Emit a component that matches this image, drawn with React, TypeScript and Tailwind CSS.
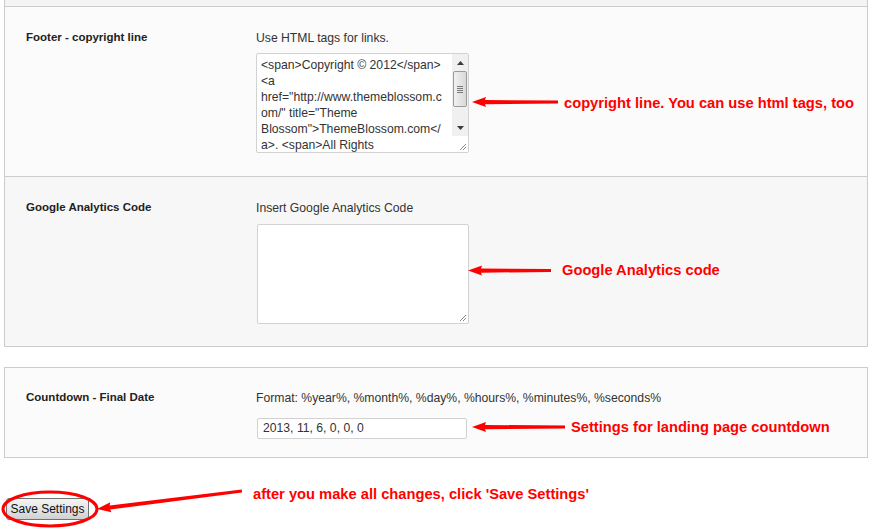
import React from 'react';

const copyrightLines = [
  '<span>Copyright © 2012</span>',
  '<a',
  'href="http://www.themeblossom.c',
  'om/" title="Theme',
  'Blossom">ThemeBlossom.com</',
  'a>. <span>All Rights',
];

// little diagonal grip in the corner of a textarea
function ResizeGrip() {
  return (
    <svg width="9" height="9" viewBox="0 0 9 9" className="block">
      <line x1="8" y1="2" x2="2" y2="8" stroke="#8a8a8a" strokeWidth="1" />
      <line x1="8" y1="5" x2="5" y2="8" stroke="#8a8a8a" strokeWidth="1" />
    </svg>
  );
}

function Scrollbar() {
  return (
    <div className="flex h-full w-[16px] flex-col bg-[#f0f0f0]">
      <div className="flex h-[17px] items-center justify-center">
        <svg width="7" height="4" viewBox="0 0 7 4">
          <polygon points="0,4 3.5,0 7,4" fill="#3c3c3c" />
        </svg>
      </div>
      <div className="mx-px flex h-[36px] items-center justify-center rounded-[2px] border border-[#9b9b9b] bg-gradient-to-r from-[#f1f1f1] to-[#d9d9d9]">
        <div className="flex flex-col gap-px">
          <div className="h-px w-[6px] bg-[#7a7a7a]" />
          <div className="h-px w-[6px] bg-[#7a7a7a]" />
          <div className="h-px w-[6px] bg-[#7a7a7a]" />
          <div className="h-px w-[6px] bg-[#7a7a7a]" />
        </div>
      </div>
      <div className="flex-1" />
      <div className="flex h-[17px] items-center justify-center">
        <svg width="7" height="4" viewBox="0 0 7 4">
          <polygon points="0,0 3.5,4 7,0" fill="#3c3c3c" />
        </svg>
      </div>
    </div>
  );
}

function Arrow({ x, y, len, angle = 0 }: { x: number; y: number; len: number; angle?: number }) {
  return (
    <g transform={`translate(${x} ${y}) rotate(${angle})`}>
      <polygon points={`0,0 14,-5 13,-2 ${len},-1.6 ${len},1.4 13,2.2 14,5`} fill="#ff0000" />
    </g>
  );
}

function Note({ children, className }: { children: React.ReactNode; className: string }) {
  return (
    <span className={`absolute whitespace-nowrap text-[14.7px] font-bold leading-none text-[#ff0000] ${className}`}>
      {children}
    </span>
  );
}

export default function App() {
  return (
    <div className="relative h-[529px] w-[874px] overflow-hidden bg-white font-['Liberation_Sans',Arial,sans-serif] text-[12.2px] text-[#333]">
      <div className="ml-[4px] w-[864px]">
        <div className="h-[7px] border-x border-b border-[#cccccc] bg-[#f4f4f4]" />

        {/* footer copyright */}
        <div className="flex h-[170px] border-x border-b border-[#cccccc] bg-[#fbfbfb] pl-[21px] pt-[23px]">
          <div className="w-[230px] text-[11.5px] font-bold leading-[14px] text-[#222]">Footer - copyright line</div>
          <div>
            <p className="mt-px leading-[14px]">Use HTML tags for links.</p>
            <div className="mt-[8px] flex h-[100px] w-[213px] overflow-hidden rounded-[2px] border border-[#d2d2d2] bg-white">
              <div className="flex-1 overflow-hidden pl-[4px] pt-[3px] leading-[16px] whitespace-pre text-[#333]">
                {copyrightLines.map((l) => (
                  <div key={l}>{l}</div>
                ))}
              </div>
              <div className="flex flex-col">
                <div className="h-[82px]">
                  <Scrollbar />
                </div>
                <div className="flex flex-1 items-end justify-end bg-white pb-px pr-px">
                  <ResizeGrip />
                </div>
              </div>
            </div>
          </div>
        </div>

        {/* analytics */}
        <div className="flex h-[170px] border-x border-b border-[#cccccc] bg-[#f7f7f7] pl-[21px] pt-[23px]">
          <div className="w-[230px] text-[11.5px] font-bold leading-[14px] text-[#222]">Google Analytics Code</div>
          <div>
            <p className="mt-px leading-[14px]">Insert Google Analytics Code</p>
            <div className="ml-px mt-[9px] flex h-[100px] w-[212px] items-end justify-end rounded-[2px] border border-[#d2d2d2] bg-white pb-px pr-px">
              <ResizeGrip />
            </div>
          </div>
        </div>

        {/* countdown */}
        <div className="mt-[20px] flex h-[91px] border border-[#cccccc] bg-[#fbfbfb] pl-[21px] pt-[22px]">
          <div className="w-[230px] text-[11.5px] font-bold leading-[14px] text-[#222]">Countdown - Final Date</div>
          <div>
            <p className="mt-px leading-[14px]">Format: %year%, %month%, %day%, %hours%, %minutes%, %seconds%</p>
            <div className="ml-px mt-[13px] flex h-[21px] w-[210px] items-center rounded-[2px] border border-[#d2d2d2] bg-white pl-[5px]">
              2013, 11, 6, 0, 0, 0
            </div>
          </div>
        </div>
      </div>

      <div className="mt-[40px] pl-[6px]">
        <button className="h-[22px] w-[83px] rounded-[3px] border border-[#707070] bg-gradient-to-b from-[#f3f3f3] via-[#e6e6e6] to-[#d0d0d0] text-[12px] leading-none text-[#111]">
          Save Settings
        </button>
      </div>

      {/* red annotations laid over the page */}
      <svg className="pointer-events-none absolute left-0 top-0" width="874" height="529">
        <Arrow x={472} y={102} len={86} />
        <Arrow x={468} y={270.5} len={83} />
        <Arrow x={472} y={427} len={93} />
        <Arrow x={97} y={509} len={146} angle={-7} />
        <ellipse cx="50" cy="509" rx="47" ry="17" fill="none" stroke="#ff0000" strokeWidth="3" />
      </svg>
      <Note className="left-[564px] top-[96px]">copyright line. You can use html tags, too</Note>
      <Note className="left-[562px] top-[263px]">Google Analytics code</Note>
      <Note className="left-[571px] top-[420px]">Settings for landing page countdown</Note>
      <Note className="left-[253px] top-[487px]">after you make all changes, click 'Save Settings'</Note>
    </div>
  );
}
